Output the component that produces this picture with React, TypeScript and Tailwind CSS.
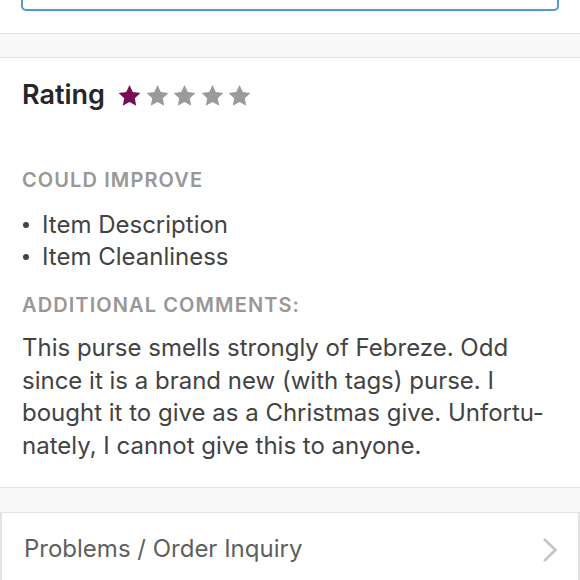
const IMPROVE = ['Item Description', 'Item Cleanliness'];

function Star({ filled }: { filled: boolean }) {
  return (
    <svg viewBox="0 0 24 24" className={`h-[25px] w-[25px] ${filled ? 'fill-[#7a0b55]' : 'fill-[#9c9997]'}`}>
      <path d="M12 2L15.12 8.71 22.46 9.6 17.04 14.64 18.47 21.9 12 18.3 5.53 21.9 6.96 14.64 1.54 9.6 8.88 8.71z" />
    </svg>
  );
}

export default function App() {
  return (
    <div className="flex min-h-[580px] w-[580px] flex-col bg-white font-['Inter',sans-serif]">
      {/* tail of the field above */}
      <div className="px-[21px]">
        <div className="h-[11px] rounded-b-[5px] border-2 border-t-0 border-[#4f9cd0]" />
      </div>

      <div className="mt-[22px] h-[25px] border-y border-[#e4e3e3] bg-[#f9f8f8]" />

      {/* Rating */}
      <div className="flex flex-col pt-[19px] pr-[22px] pl-[22px]">
        <div className="flex items-center gap-[12px]">
          <span className="text-[27px] font-semibold leading-[36px] text-[#262626]">Rating</span>
          <div className="flex items-center gap-[2.5px]">
            {[0, 1, 2, 3, 4].map((i) => (
              <Star key={i} filled={i === 0} />
            ))}
          </div>
        </div>

        <h3 className="mt-[55px] text-[20px] font-semibold uppercase leading-[24px] tracking-[1.1px] text-[#9a9796]">
          Could improve
        </h3>
        <ul className="mt-[17px] flex flex-col">
          {IMPROVE.map((item) => (
            <li key={item} className="flex items-center text-[24px] leading-[32px] text-[#434343]">
              <span className="mr-[13px] ml-[1px] h-[6px] w-[6px] rounded-full bg-[#434343]" />
              {item}
            </li>
          ))}
        </ul>

        <h3 className="mt-[20px] text-[20px] font-semibold uppercase leading-[24px] tracking-[1.1px] text-[#9a9796]">
          Additional comments:
        </h3>
        <p className="mt-[15px] text-[24px] leading-[32.5px] text-[#434343]">
          This purse smells strongly of Febreze. Odd since it is a brand new (with tags) purse. I bought it to give as a
          Christmas give. Unfortu&shy;nately, I cannot give this to anyone.
        </p>
      </div>

      <div className="mt-[25px] h-[26px] border-y border-[#e4e3e3] bg-[#f9f8f8]" />

      {/* Inquiry row */}
      <div className="flex h-[72px] items-center justify-between border-x-2 border-[#e4e3e3] pr-[20px] pl-[22px]">
        <span className="text-[24px] text-[#5f5f5f]">Problems / Order Inquiry</span>
        <svg viewBox="0 0 16 26" className="mt-[2px] h-[26px] w-[16px] fill-none stroke-[#c6c6c6]" strokeWidth={2.6}>
          <polyline points="2,2 13.5,13 2,24" />
        </svg>
      </div>
    </div>
  );
}
